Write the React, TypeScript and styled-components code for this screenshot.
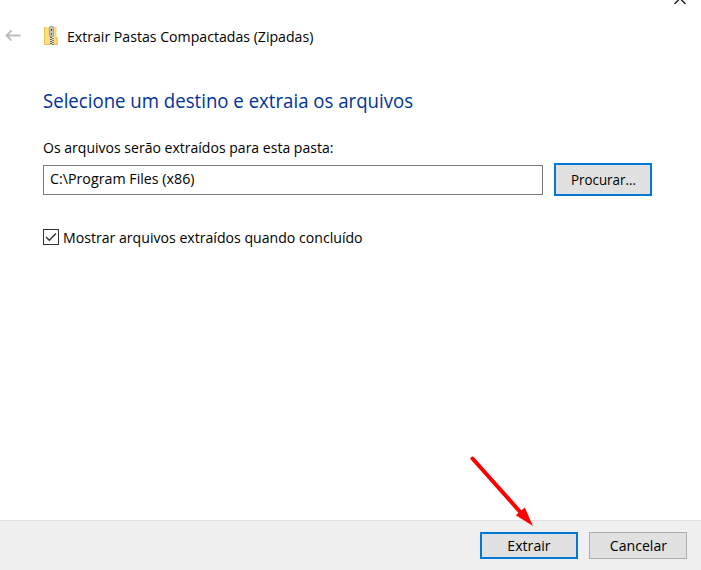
import React from "react";
import styled, { createGlobalStyle } from "styled-components";

const GlobalStyle = createGlobalStyle`
  * { box-sizing: border-box; }
  html, body, #root { margin: 0; height: 100%; }
  body {
    background: #fff;
    color: #000;
    overflow: hidden;
    font: 15px/20px "Segoe UI", "Open Sans", "Noto Sans", sans-serif;
  }
`;

const Dialog = styled.div`
  position: relative;
  display: flex;
  flex-direction: column;
  width: 701px;
  height: 570px;
  overflow: hidden;
  background: #fff;
`;

const TitleBar = styled.header`
  display: flex;
  align-items: center;
  height: 32px;
  margin-top: 20px;
  padding-left: 5px;
`;

const BackIcon = styled.svg`
  width: 16px;
  height: 14px;
  margin-right: 22px;
`;

const ZipIcon = styled.svg`
  width: 16px;
  height: 20px;
  margin-right: 8px;
`;

const CloseIcon = styled.svg`
  position: absolute;
  top: 0;
  right: 15px;
  width: 12px;
  height: 4px;
`;

const Label = styled.span<{ $stretch?: number }>`
  display: inline-block;
  white-space: nowrap;
  transform: scaleX(${(p) => p.$stretch ?? 0.941});
  transform-origin: left center;
`;

const Content = styled.main`
  flex: 1;
  display: flex;
  flex-direction: column;
  align-items: flex-start;
  padding: 35px 49px 0 43px;
`;

const Heading = styled.h1`
  margin: 0 0 22px;
  color: #003399;
  font-size: 20px;
  font-weight: 400;
  line-height: 28px;
`;

const PathRow = styled.div`
  display: flex;
  align-items: center;
  gap: 11px;
  height: 33px;
  margin-top: 6px;
`;

const PathField = styled.div`
  display: flex;
  align-items: center;
  width: 500px;
  height: 30px;
  padding: 0 6px 3px;
  border: 1px solid #7a7a7a;
  background: #fff;
`;

const Button = styled.button<{ $primary?: boolean; $height: number }>`
  display: flex;
  align-items: center;
  justify-content: center;
  width: 98px;
  height: ${(p) => p.$height}px;
  padding: 0 0 2px;
  border: ${(p) => (p.$primary ? "2px solid #0078d7" : "1px solid #adadad")};
  border-radius: 0;
  background: #e1e1e1;
  color: #000;
  font: inherit;

  ${Label} {
    transform-origin: center;
  }
`;

const CheckRow = styled.label`
  display: flex;
  align-items: center;
  gap: 4px;
  height: 20px;
  margin-top: 31px;
`;

const CheckBox = styled.svg`
  width: 16px;
  height: 16px;
`;

const Footer = styled.footer`
  display: flex;
  justify-content: flex-end;
  gap: 11px;
  height: 50px;
  padding: 11px 14px 0;
  border-top: 1px solid #dfdfdf;
  background: #f0f0f0;
`;

const Pointer = styled.svg`
  position: absolute;
  left: 466px;
  top: 452px;
  width: 72px;
  height: 78px;
  pointer-events: none;
`;

const TEETH = [11, 13, 15, 17];

function ZipFolder() {
  return (
    <ZipIcon viewBox="0 0 16 20">
      <path d="M1 1H13V11H15V19H1Z" fill="#fddf7c" />
      <path d="M13 11H15V19H13Z" fill="#f8d264" />
      <path d="M1.5 1V18.5H15" fill="none" stroke="#eac450" />
      <path d="M13 1V18" stroke="#efcb5c" strokeWidth="0.8" />
      <rect x="7" y="10" width="4" height="9" fill="#e8e2cc" />
      {TEETH.map((y) => (
        <React.Fragment key={y}>
          <rect x="7" y={y} width="2" height="1" fill="#5c5c5c" />
          <rect x="9" y={y + 1} width="2" height="1" fill="#777" />
        </React.Fragment>
      ))}
      <rect x="6.4" y="0.4" width="4.2" height="10.2" rx="1.4" fill="#c3c5c8" stroke="#8d9094" strokeWidth="0.8" />
      <rect x="8" y="3" width="1" height="2" fill="#333" />
      <rect x="8" y="7" width="1" height="2" fill="#555" />
    </ZipIcon>
  );
}

export default function App() {
  return (
    <>
      <GlobalStyle />
      <Dialog>
        <CloseIcon viewBox="0 0 12 4">
          <path d="M0.5 4L6 -1.5L11.5 4" fill="none" stroke="#000" strokeWidth="1.2" />
        </CloseIcon>
        <TitleBar>
          <BackIcon viewBox="0 0 16 14">
            <path d="M15.5 6.5H1.5M6.5 1.5L1.5 6.5L6.5 11.5" fill="none" stroke="#bcbcbc" strokeWidth="1.9" />
          </BackIcon>
          <ZipFolder />
          <Label>Extrair Pastas Compactadas (Zipadas)</Label>
        </TitleBar>
        <Content>
          <Heading>
            <Label $stretch={0.931}>Selecione um destino e extraia os arquivos</Label>
          </Heading>
          <Label $stretch={0.936}>Os arquivos serão extraídos para esta pasta:</Label>
          <PathRow>
            <PathField>
              <Label $stretch={0.95}>C:\Program Files (x86)</Label>
            </PathField>
            <Button $primary $height={33}>
              <Label $stretch={0.89}>Procurar...</Label>
            </Button>
          </PathRow>
          <CheckRow>
            <CheckBox viewBox="0 0 16 16">
              <rect x="0.5" y="0.5" width="15" height="15" fill="#fff" stroke="#333" />
              <path d="M3 8L6.3 11.3L13 4.6" fill="none" stroke="#333" strokeWidth="1.4" />
            </CheckBox>
            <Label>Mostrar arquivos extraídos quando concluído</Label>
          </CheckRow>
        </Content>
        <Footer>
          <Button $primary $height={27}>
            <Label>Extrair</Label>
          </Button>
          <Button $height={27}>
            <Label>Cancelar</Label>
          </Button>
        </Footer>
        <Pointer viewBox="0 0 72 78">
          <path d="M6.5 6.5L56 62" stroke="#ff0000" strokeWidth="4" strokeLinecap="round" />
          <path d="M67 74L49.8 63.3L58.8 55.5Z" fill="#ff0000" />
        </Pointer>
      </Dialog>
    </>
  );
}
